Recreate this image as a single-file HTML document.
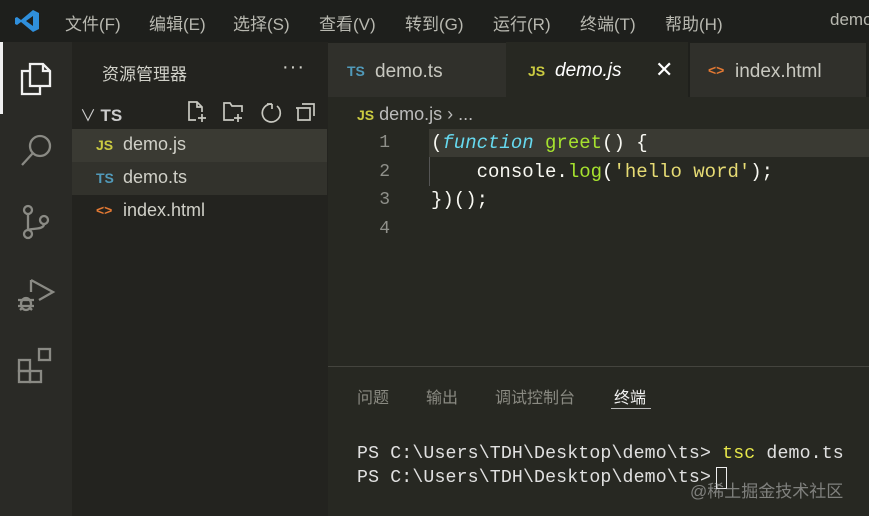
<!DOCTYPE html>
<html><head><meta charset="utf-8"><style>
*{margin:0;padding:0;box-sizing:border-box}
body{width:869px;height:516px;overflow:hidden;background:#272822;font-family:"Liberation Sans","Noto Sans CJK SC",sans-serif;position:relative;color:#ccc}
.abs{position:absolute}
.mono{font-family:"Liberation Mono","Noto Sans CJK SC",monospace}
#title{left:0;top:0;width:869px;height:42px;background:#1e1f1c}
#title span{position:absolute;top:10px;font-size:17px;color:#b8b8b0}
#act{left:0;top:42px;width:72px;height:474px;background:#2a2a26}
#side{left:72px;top:42px;width:256px;height:474px;background:#23231f}
#tabs{left:328px;top:42px;width:541px;height:55px;background:#1f201c}
.tab{position:absolute;top:1px;height:54px;background:#30302b;font-size:19px;color:#c8c8c0}
.row{position:absolute;left:0;width:255px;height:33px;font-size:18px;color:#d0d0c8}
.ic{font-weight:bold;font-size:14px}
.ln{position:absolute;left:360px;width:30px;text-align:right;font-size:18px;color:#8f908a}
.code{position:absolute;left:431px;font-size:19px;color:#f8f8f2;white-space:pre}
</style></head><body>
<div id="title" class="abs">
<svg class="abs" style="left:14px;top:8px" width="26" height="26" viewBox="0 0 26 26"><path d="M19 2 L25 5 V21 L19 24 L7 14 L3 17 L1 16 V10 L3 9 L7 12 Z M19 8 L12 13 L19 18 Z" fill="#2f8fdc"/></svg>
<span style="left:65px">文件(F)</span><span style="left:149px">编辑(E)</span><span style="left:233px">选择(S)</span><span style="left:319px">查看(V)</span><span style="left:405px">转到(G)</span><span style="left:493px">运行(R)</span><span style="left:580px">终端(T)</span><span style="left:665px">帮助(H)</span><span style="left:830px">demo</span>
</div>
<div id="act" class="abs">
<div class="abs" style="left:0;top:0;width:3px;height:72px;background:#f0f0f0"></div>
<svg class="abs" style="left:16px;top:16px" width="40" height="40" viewBox="0 0 40 40" fill="none" stroke="#f0f0f0" stroke-width="2.3"><path d="M14 6 H27 L34 13 V28 H14 Z M27 6 V13 H34"/><path d="M14 13 H6 V36 H24 V28"/></svg>
<svg class="abs" style="left:16px;top:88px" width="40" height="40" viewBox="0 0 40 40" fill="none" stroke="#8a8a84" stroke-width="2.3"><circle cx="24" cy="16" r="10"/><path d="M17 23 L6 35"/></svg>
<svg class="abs" style="left:16px;top:160px" width="40" height="40" viewBox="0 0 40 40" fill="none" stroke="#8a8a84" stroke-width="2.3"><circle cx="12" cy="8" r="4"/><circle cx="12" cy="32" r="4"/><circle cx="28" cy="18" r="4"/><path d="M12 12 V28 M28 22 C28 28 16 26 12 28"/></svg>
<svg class="abs" style="left:16px;top:232px" width="40" height="40" viewBox="0 0 40 40" fill="none" stroke="#8a8a84" stroke-width="2.3"><path d="M15 6 V18 M15 6 L37 18 L23 26"/><ellipse cx="10" cy="30" rx="5" ry="6"/><path d="M2 26 H18 M2 32 H18 M4 36 L6 34 M16 36 L14 34"/></svg>
<svg class="abs" style="left:16px;top:304px" width="40" height="40" viewBox="0 0 40 40" fill="none" stroke="#8a8a84" stroke-width="2.3"><rect x="3" y="14" width="11" height="11"/><rect x="3" y="25" width="11" height="11"/><rect x="14" y="25" width="11" height="11"/><rect x="23" y="3" width="11" height="11"/></svg>
</div>
<div id="side" class="abs">
<div class="abs" style="left:30px;top:18px;font-size:17px;color:#d0d0c8">资源管理器</div>
<div class="abs" style="left:210px;top:14px;font-size:20px;color:#d0d0c8;letter-spacing:1px">···</div>
<div class="abs" style="left:8px;top:60px;font-size:16px;color:#ccc">∨ <b style="font-size:17px">TS</b></div>
<svg class="abs" style="left:114px;top:56px" width="130" height="26" viewBox="0 0 130 26" fill="none" stroke="#c8c8c0" stroke-width="1.7"><path d="M10 22 H3 V4 H11 L16 9 V14 M11 4 V9 H16 M16 16 V24 M12 20 H20"/><path d="M48 22 H38 V5 H44 L46 8 H56 V14 M52 16 V24 M48 20 H56"/><path d="M86 6 A9 9 0 1 0 91 8 M86 6 V11 M86 6 H81"/><path d="M110 10 H122 M112 10 V22 H124 V10 Z M116 6 H128 V18" /></svg>
<div class="row" style="top:87px;background:#3a3a33"><span class="ic abs" style="left:24px;top:8px;color:#cbcb41">JS</span><span class="abs" style="left:51px;top:5px">demo.js</span></div>
<div class="row" style="top:120px;background:#32322c"><span class="ic abs" style="left:24px;top:8px;color:#519aba">TS</span><span class="abs" style="left:51px;top:5px">demo.ts</span></div>
<div class="row" style="top:153px"><span class="ic abs" style="left:24px;top:7px;color:#e37933">&lt;&gt;</span><span class="abs" style="left:51px;top:5px">index.html</span></div>
</div>
<div id="tabs" class="abs">
<div class="tab" style="left:0;width:178px"><span class="ic abs" style="left:19px;top:20px;color:#519aba">TS</span><span class="abs" style="left:47px;top:18px">demo.ts</span></div>
<div class="tab" style="left:178px;width:182px;background:#272822;top:0;height:55px"><span class="ic abs" style="left:22px;top:21px;color:#cbcb41">JS</span><span class="abs" style="left:49px;top:18px;font-style:italic;color:#fff">demo.js</span><span class="abs" style="left:149px;top:15px;color:#fff;font-size:22px">✕</span></div>
<div class="tab" style="left:362px;width:176px"><span class="ic abs" style="left:18px;top:19px;color:#e37933">&lt;&gt;</span><span class="abs" style="left:45px;top:18px">index.html</span></div>
</div>
<div class="abs" style="left:357px;top:104px;font-size:18px;color:#bbb"><span class="ic" style="color:#cbcb41">JS</span> demo.js › ...</div>
<div class="abs" style="left:429px;top:129px;width:440px;height:28px;background:#3a3a33"></div>
<div class="abs" style="left:429px;top:157px;width:1px;height:29px;background:#555"></div>
<div class="ln mono" style="top:133px">1</div><div class="ln mono" style="top:162px">2</div><div class="ln mono" style="top:190px">3</div><div class="ln mono" style="top:219px">4</div>
<div class="code mono" style="top:132px">(<i style="color:#66d9ef">function</i> <span style="color:#a6e22e">greet</span>() {</div>
<div class="code mono" style="top:161px">    console.<span style="color:#a6e22e">log</span>(<span style="color:#e6db74">'hello word'</span>);</div>
<div class="code mono" style="top:189px">})();</div>
<div class="abs" style="left:328px;top:366px;width:541px;height:1px;background:#44443e"></div>
<div class="abs" style="left:357px;top:384px;font-size:16px;color:#8a8a82">问题</div>
<div class="abs" style="left:426px;top:384px;font-size:16px;color:#8a8a82">输出</div>
<div class="abs" style="left:495px;top:384px;font-size:16px;color:#8a8a82">调试控制台</div>
<div class="abs" style="left:614px;top:384px;font-size:16px;color:#f0f0f0">终端</div>
<div class="abs" style="left:611px;top:408px;width:40px;height:1px;background:#bbb"></div>
<div class="abs mono" style="left:357px;top:444px;font-size:18.2px;color:#e0e0e0;white-space:pre;letter-spacing:0.15px">PS C:\Users\TDH\Desktop\demo\ts> <span style="color:#e6e64a">tsc</span> demo.ts</div>
<div class="abs mono" style="left:357px;top:468px;font-size:18.2px;color:#e0e0e0;white-space:pre;letter-spacing:0.15px">PS C:\Users\TDH\Desktop\demo\ts></div>
<div class="abs" style="left:716px;top:467px;width:11px;height:22px;border:1.5px solid #eee"></div>
<div class="abs" style="left:690px;top:477px;font-size:17px;color:rgba(200,200,200,0.55)">@稀土掘金技术社区</div>
</body></html>
